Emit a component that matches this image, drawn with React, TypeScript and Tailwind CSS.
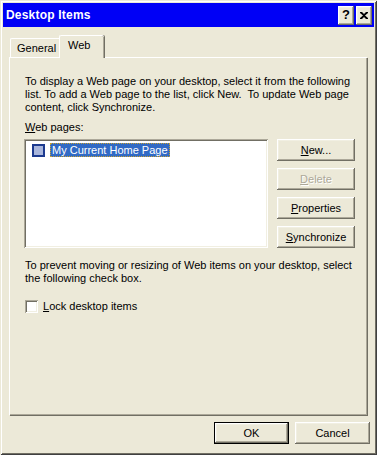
import React from 'react';

const raised =
  'shadow-[inset_-1px_-1px_0_#716f64,inset_1px_1px_0_#ffffff,inset_-2px_-2px_0_#aca899,inset_2px_2px_0_#f1efe2]';
const sunken =
  'shadow-[inset_1px_1px_0_#aca899,inset_-1px_-1px_0_#ffffff,inset_2px_2px_0_#716f64,inset_-2px_-2px_0_#f1efe2]';

const Btn: React.FC<{ children: React.ReactNode; disabled?: boolean; className?: string }> = ({
  children,
  disabled,
  className = '',
}) => (
  <div
    className={`flex items-center justify-center bg-[#ece9d8] ${raised} ${
      disabled ? 'text-[#aca899] [text-shadow:1px_1px_0_#ffffff]' : 'text-black'
    } ${className}`}
  >
    {children}
  </div>
);

const App: React.FC = () => {
  return (
    <div className="w-[377px] h-[455px] bg-[#ece9d8] pt-[3px] px-[3px] font-['Liberation_Sans',Arial,sans-serif] text-[11px] leading-[13px] text-black shadow-[inset_1px_1px_0_#ece9d8,inset_-1px_-1px_0_#404040,inset_2px_2px_0_#ffffff,inset_-2px_-2px_0_#716f64] select-none">
      {/* title bar */}
      <div className="h-[24px] bg-[#0000f6] flex items-center justify-between pl-[3px] pr-[2px]">
        <span className="text-white font-bold text-[12px] tracking-[0.2px]">Desktop Items</span>
        <div className="flex gap-[2px]">
          <div className={`w-[16px] h-[19px] bg-[#ece9d8] ${raised} flex items-center justify-center font-bold text-[13px] pb-[1px]`}>?</div>
          <div className={`w-[16px] h-[19px] bg-[#ece9d8] ${raised} flex items-center justify-center`}>
            <svg width="8" height="7" viewBox="0 0 8 7">
              <path d="M0 0h2l2 2 2-2h2v1L5 3.5 8 6v1H6L4 5 2 7H0V6l3-2.5L0 1z" fill="#000" />
            </svg>
          </div>
        </div>
      </div>

      {/* tabs */}
      <div className="relative mt-[8px] ml-[6px] h-[22px] z-10">
        <div className="absolute left-[1px] top-[3px] w-[50px] h-[19px] border-t border-l border-white rounded-tl-[2px] pl-[6px] pt-[3px]">
          General
        </div>
        <div className="absolute left-[50px] top-0 w-[45px] h-[23px] bg-[#ece9d8] border-t border-l border-white rounded-t-[2px] shadow-[inset_-1px_0_0_#aca899,1px_0_0_#716f64] pl-[8px] pt-[3px]">
          Web
        </div>
      </div>

      {/* panel */}
      <div className="ml-[6px] w-[358px] h-[358px] border-t border-l border-white shadow-[inset_-1px_-1px_0_#aca899,1px_1px_0_#716f64] pl-[15px] pt-[17px]">
        <p className="w-[335px]">
          To display a Web page on your desktop, select it from the following list. To add a Web page to the list, click New.&nbsp; To update Web page content, click Synchronize.
        </p>
        <p className="mt-[7px]">
          <u>W</u>eb pages:
        </p>
        <div className="flex mt-[5px] -ml-[1px]">
          <div className={`w-[244px] h-[109px] bg-white ${sunken} pt-[4px] pl-[8px]`}>
            <div className="flex items-center h-[14px]">
              <div className="w-[13px] h-[13px] border-[2px] border-[#1c3a8f] bg-[#a9b6dc]" />
              <span className="ml-[5px] px-[2px] h-[14px] leading-[14px] bg-[#316ac5] text-white outline-1 outline-dotted outline-[#c8a030] -outline-offset-1">
                My Current Home Page
              </span>
            </div>
          </div>
          <div className="ml-[9px] flex flex-col gap-[7px]">
            <Btn className="w-[78px] h-[22px]">
              <u>N</u>ew...
            </Btn>
            <Btn className="w-[78px] h-[22px]" disabled>
              <u>D</u>elete
            </Btn>
            <Btn className="w-[78px] h-[22px]">
              <u>P</u>roperties
            </Btn>
            <Btn className="w-[78px] h-[22px]">
              <u>S</u>ynchronize
            </Btn>
          </div>
        </div>
        <p className="mt-[11px] w-[335px]">
          To prevent moving or resizing of Web items on your desktop, select the following check box.
        </p>
        <div className="flex items-center mt-[15px]">
          <div className={`w-[13px] h-[13px] bg-white ${sunken}`} />
          <span className="ml-[5px]">
            <u>L</u>ock desktop items
          </span>
        </div>
      </div>

      {/* bottom buttons */}
      <div className="flex justify-end gap-[6px] mt-[7px] pr-[4px]">
        <div className="w-[75px] h-[22px] border border-black">
          <Btn className="w-full h-full">OK</Btn>
        </div>
        <Btn className="w-[75px] h-[22px]">Cancel</Btn>
      </div>
    </div>
  );
};

export default App;
